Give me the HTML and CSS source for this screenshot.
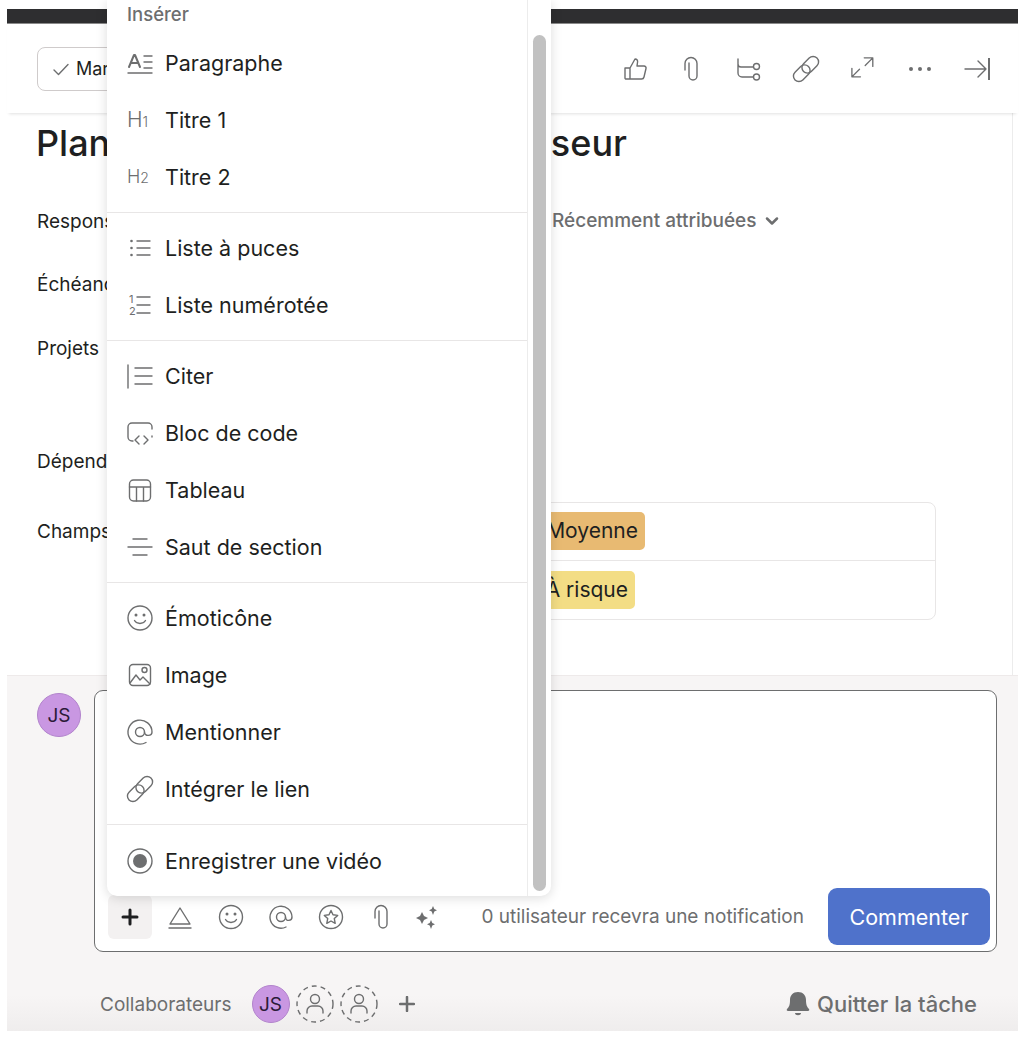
FILE: index.html
```html
<!DOCTYPE html>
<html lang="fr">
<head>
    <meta charset="UTF-8">
    <title>Tâche</title>
    <link rel="stylesheet" href="styles.css">
</head>
<body>
    <div class="app">
        <div class="topbar"></div>
        <header class="task-header">
            <button class="mark-btn">
                <svg width="18" height="18" viewBox="0 0 18 18"><path d="M2 10l4.500 4.500L16 4.500" class="line"/></svg>
                Marquer comme terminée
            </button>
            <div class="header-icons">
                <svg width="26" height="26" viewBox="0 0 26 26"><path d="M3 12h5v11H4a1 1 0 0 1-1-1zM8 12l5-9c2 0 3 1.500 2.500 3.500L15 10h7a2 2 0 0 1 2 2.500L22 21a2.500 2.500 0 0 1-2.500 2H8" class="line"/></svg>
                <svg width="26" height="26" viewBox="0 0 26 26"><path d="M6 14V7.500a6 6 0 0 1 12 0V20a4 4 0 0 1-8 0V7" class="line"/></svg>
                <svg width="26" height="26" viewBox="0 0 26 26"><path d="M2 3v14a4 4 0 0 0 4 4h11M2 8a3 3 0 0 0 3 3h12" class="line"/><circle cx="20.500" cy="10.500" r="3" class="line"/><circle cx="20.500" cy="21" r="3" class="line"/></svg>
                <svg width="26" height="26" viewBox="0 0 26 26"><g class="line" transform="rotate(-45 13 13)"><rect x="-2.500" y="7.500" width="19" height="11" rx="5.500"/><rect x="9.500" y="7.500" width="19" height="11" rx="5.500"/></g></svg>
                <svg width="26" height="26" viewBox="0 0 26 26"><path d="M15 3h9v9M24 3l-8 8M11 23H2v-9M2 23l8-8" class="line" transform="translate(0 -1) scale(.95)"/></svg>
                <svg width="26" height="26" viewBox="0 0 26 26"><circle cx="4" cy="13" r="2" class="fill"/><circle cx="13" cy="13" r="2" class="fill"/><circle cx="22" cy="13" r="2" class="fill"/></svg>
                <svg width="26" height="26" viewBox="0 0 26 26"><path d="M1 13h21M14 5l8 8-8 8" class="line"/><path d="M25 2v22" class="line bar"/></svg>
            </div>
        </header>

        <main class="task-body">
            <h1 class="task-title">Planifier une visite du fournisseur</h1>
            <div class="field field-assignee">
                <span class="field-label">Responsable</span>
                <span class="recent">Récemment attribuées
                    <svg width="14" height="14" viewBox="0 0 14 14"><path d="M2 4.500l5 5 5-5" class="line thick"/></svg>
                </span>
            </div>
            <div class="field field-date"><span class="field-label">Échéance</span></div>
            <div class="field field-projects"><span class="field-label">Projets</span></div>
            <div class="field field-deps"><span class="field-label">Dépendances</span></div>
            <div class="field field-custom">
                <span class="field-label">Champs</span>
                <div class="custom-card">
                    <div class="custom-row"><span class="chip chip-orange">Moyenne</span></div>
                    <div class="custom-row"><span class="chip chip-yellow">À risque</span></div>
                </div>
            </div>
        </main>

        <footer class="composer-area">
            <div class="composer-row">
                <div class="avatar">JS</div>
                <div class="composer">
                    <div class="composer-tools">
                        <span class="tool tool-active">
                            <svg width="18" height="18" viewBox="0 0 18 18"><path d="M9 2v14M2 9h14" class="line dark"/></svg>
                        </span>
                        <span class="tool">
                            <svg width="26" height="26" viewBox="0 0 26 26"><path d="M3 20L13 4l10 16zM2 24h22" class="line"/></svg>
                        </span>
                        <span class="tool">
                            <svg width="26" height="26" viewBox="0 0 26 26"><circle cx="13" cy="13" r="11.500" class="line"/><circle cx="9" cy="10" r="1.500" class="fill"/><circle cx="17" cy="10" r="1.500" class="fill"/><path d="M7.500 15.500c2.500 4 8.500 4 11 0" class="line"/></svg>
                        </span>
                        <span class="tool">
                            <svg width="26" height="26" viewBox="0 0 26 26"><circle cx="13" cy="13" r="4.500" class="line"/><path d="M17.500 13c0 5 6.500 4 6.500 0A11 11 0 1 0 18 23" class="line"/></svg>
                        </span>
                        <span class="tool">
                            <svg width="26" height="26" viewBox="0 0 26 26"><circle cx="13" cy="13" r="11.500" class="line"/><path d="M13 6.500l2 4.300 4.700.6-3.400 3.200.9 4.700-4.200-2.300-4.200 2.300.9-4.700-3.400-3.200 4.700-.6z" class="line"/></svg>
                        </span>
                        <span class="tool">
                            <svg width="26" height="26" viewBox="0 0 26 26"><path d="M7 14V7.500a6 6 0 0 1 12 0V20a4 4 0 0 1-8 0V7" class="line"/></svg>
                        </span>
                        <span class="tool tool-spark">
                            <svg width="26" height="26" viewBox="0 0 26 26"><path d="M9 8l2 4 4 2-4 2-2 4-2-4-4-2 4-2zM20 2l1.300 3 2.700 1.300-2.700 1.300L20 11l-1.300-3.400L16 6.300l2.700-1.300zM18 16l1.300 3 2.700 1.300-2.700 1.300L18 25l-1.300-3.400-2.700-1.300 2.700-1.300z" class="fill"/></svg>
                        </span>
                        <span class="notify">0 utilisateur recevra une notification</span>
                        <button class="comment-btn">Commenter</button>
                    </div>
                </div>
            </div>
            <div class="collab-row">
                <span class="collab-label">Collaborateurs</span>
                <div class="avatar avatar-small">JS</div>
                <svg class="ghost" width="38" height="38" viewBox="0 0 38 38"><circle cx="19" cy="19" r="18" class="line ghost-ring"/><circle cx="19" cy="14" r="4.500" class="line"/><path d="M11 28v-2a5 5 0 0 1 5-5h6a5 5 0 0 1 5 5v2" class="line"/></svg>
                <svg class="ghost" width="38" height="38" viewBox="0 0 38 38"><circle cx="19" cy="19" r="18" class="line ghost-ring"/><circle cx="19" cy="14" r="4.500" class="line"/><path d="M11 28v-2a5 5 0 0 1 5-5h6a5 5 0 0 1 5 5v2" class="line"/></svg>
                <svg class="collab-plus" width="16" height="16" viewBox="0 0 16 16"><path d="M8 1v14M1 8h14" class="line thick"/></svg>
                <span class="leave">
                    <svg width="24" height="26" viewBox="0 0 24 26"><path d="M12 1c-5 0-8 3.500-8 8 0 5-1 7-3 9-.7 1 0 2 1 2h20c1 0 1.700-1 1-2-2-2-3-4-3-9 0-4.500-3-8-8-8zM9 22h6c0 3-6 3-6 0z" class="fill"/></svg>
                    Quitter la tâche
                </span>
            </div>
        </footer>
    </div>

    <!-- menu Insérer -->
    <div class="insert-menu">
        <div class="menu-list">
            <div class="menu-title">Insérer</div>
            <div class="menu-group">
                <div class="menu-item">
                    <svg width="26" height="26" viewBox="0 0 26 26"><path d="M2 17L7 5h1l5 12M4 13h7" class="line heavy"/><path d="M1 23h24M17 6h8M17 12h8M17 18h8" class="line"/></svg>
                    Paragraphe
                </div>
                <div class="menu-item"><span class="h-icon">H<small>1</small></span>Titre 1</div>
                <div class="menu-item"><span class="h-icon h-icon-2">H<small>2</small></span>Titre 2</div>
            </div>
            <div class="menu-group">
                <div class="menu-item">
                    <svg width="26" height="26" viewBox="0 0 26 26"><circle cx="4.500" cy="6" r="1.300" class="fill"/><circle cx="4.500" cy="13" r="1.300" class="fill"/><circle cx="4.500" cy="20" r="1.300" class="fill"/><path d="M10 6h13M10 13h13M10 20h13" class="line"/></svg>
                    Liste à puces
                </div>
                <div class="menu-item">
                    <svg width="26" height="26" viewBox="0 0 26 26"><path d="M10 5h13M10 13h13M10 21h13" class="line"/></svg>
                    <span class="num-icon">1<br>2</span>
                    Liste numérotée
                </div>
            </div>
            <div class="menu-group">
                <div class="menu-item">
                    <svg width="26" height="26" viewBox="0 0 26 26"><path d="M1 2v23M8 5h17M8 13h17M8 21h17" class="line"/></svg>
                    Citer
                </div>
                <div class="menu-item">
                    <svg width="26" height="26" viewBox="0 0 26 26"><path d="M6 21H5a4 4 0 0 1-4-4V7a4 4 0 0 1 4-4h16a4 4 0 0 1 4 4v2M25 17v-1M12 16l-4 4 4 4M17 16l4 4-4 4" class="line"/></svg>
                    Bloc de code
                </div>
                <div class="menu-item">
                    <svg width="26" height="26" viewBox="0 0 26 26"><rect x="2.500" y="3" width="21" height="21" rx="4" class="line"/><path d="M2.500 10h21M9.500 10v14M16.500 10v14" class="line"/></svg>
                    Tableau
                </div>
                <div class="menu-item">
                    <svg width="26" height="26" viewBox="0 0 26 26"><path d="M6 5h14M1 13h24M6 21h14" class="line"/></svg>
                    Saut de section
                </div>
            </div>
            <div class="menu-group">
                <div class="menu-item">
                    <svg width="26" height="26" viewBox="0 0 26 26"><circle cx="13" cy="13" r="12" class="line"/><circle cx="9" cy="10" r="1.500" class="fill"/><circle cx="17" cy="10" r="1.500" class="fill"/><path d="M7.500 15.500c2.500 4 8.500 4 11 0" class="line"/></svg>
                    Émoticône
                </div>
                <div class="menu-item">
                    <svg width="26" height="26" viewBox="0 0 26 26"><rect x="2.500" y="2.500" width="21" height="21" rx="3.500" class="line"/><circle cx="17.500" cy="8" r="2.500" class="line"/><path d="M3 21l6-8 4 5 3-3 7 7" class="line"/></svg>
                    Image
                </div>
                <div class="menu-item">
                    <svg width="26" height="26" viewBox="0 0 26 26"><circle cx="13" cy="13" r="4.500" class="line"/><path d="M17.500 13c0 5 7.500 4 7.500 0A12 12 0 1 0 19 23.500" class="line"/></svg>
                    Mentionner
                </div>
                <div class="menu-item">
                    <svg width="26" height="26" viewBox="0 0 26 26"><g class="line" transform="rotate(-45 13 13)"><rect x="-2.500" y="7.500" width="19" height="11" rx="5.500"/><rect x="9.500" y="7.500" width="19" height="11" rx="5.500"/></g></svg>
                    Intégrer le lien
                </div>
            </div>
            <div class="menu-group">
                <div class="menu-item">
                    <svg width="26" height="26" viewBox="0 0 26 26"><circle cx="13" cy="13" r="12" class="line"/><circle cx="13" cy="13" r="7" class="fill"/></svg>
                    Enregistrer une vidéo
                </div>
            </div>
        </div>
        <div class="menu-scroll"><div class="menu-thumb"></div></div>
    </div>
</body>
</html>
```

FILE: styles.css
```css
body {
    font-family: "Inter", "Liberation Sans", sans-serif;
    background-color: #ffffff;
    margin: 0;
    padding: 0;
    color: #1e1f21;
    position: relative;
    height: 1040px;
    overflow: hidden;
}

.line {
    fill: none;
    stroke: #6d6e6f;
    stroke-width: 1.4;
    stroke-linecap: round;
    stroke-linejoin: round;
}

.line.thick {
    stroke-width: 2.5;
}

.line.heavy {
    stroke-width: 2;
}

.line.bar {
    stroke-width: 2;
    stroke-linecap: butt;
}

.line.dark {
    stroke: #1e1f21;
    stroke-width: 3;
}

.line.ghost-ring {
    stroke-dasharray: 5 4;
    stroke-linecap: butt;
}

.fill {
    fill: #6d6e6f;
}

.app {
    margin-left: 7px;
    width: 1011px;
    padding-top: 9px;
    height: 1022px;
    display: flex;
    flex-direction: column;
}

.topbar {
    height: 15px;
    background-color: #2e2e30;
    border-bottom: 1px solid #8a8a8a;
    box-sizing: border-box;
}

.task-header {
    height: 89px;
    box-sizing: border-box;
    display: flex;
    justify-content: space-between;
    align-items: center;
    padding: 0 28px 0 30px;
    box-shadow: 0 3px 3px -2px rgba(0, 0, 0, 0.12);
    position: relative;
}

.mark-btn {
    height: 44px;
    width: 300px;
    display: flex;
    align-items: center;
    gap: 6px;
    padding: 0 14px;
    font: inherit;
    font-size: 18px;
    color: #1e1f21;
    background: #ffffff;
    border: 1px solid #cfcbcb;
    border-radius: 8px;
    white-space: nowrap;
    overflow: hidden;
}

.header-icons {
    display: flex;
    gap: 31px;
}

.header-icons svg {
    overflow: visible;
}

.task-body {
    height: 562px;
    box-sizing: border-box;
    padding: 0 5px 0 30px;
    border-right: 1px solid #ececec;
    margin-right: 5px;
    overflow: hidden;
}

.task-title {
    margin: 8px 0 0 -1px;
    font-size: 36px;
    line-height: 44px;
    font-weight: 500;
    word-spacing: 3.750px;
    white-space: nowrap;
}

.field {
    display: flex;
    font-size: 19px;
    line-height: 22px;
}

.field-label {
    width: 150px;
    flex: none;
}

.field-assignee {
    margin-top: 46px;
}

.field-date {
    margin-top: 41px;
}

.field-projects {
    margin-top: 42px;
}

.field-deps {
    margin-top: 91px;
}

.field-custom {
    margin-top: 48px;
}

.recent {
    margin-left: 365px;
    margin-top: -2px;
    color: #6d6e6f;
    font-weight: 500;
    display: flex;
    align-items: center;
    gap: 8px;
    white-space: nowrap;
}

.custom-card {
    width: 749px;
    margin-top: -19px;
    border: 1px solid #e8e6e6;
    border-radius: 8px;
    box-sizing: border-box;
}

.custom-row {
    height: 57px;
    display: flex;
    align-items: center;
    justify-content: flex-end;
    padding-right: 290px;
    font-size: 21px;
}

.custom-row + .custom-row {
    height: 58px;
    border-top: 1px solid #e8e6e6;
}

.chip {
    height: 38px;
    line-height: 38px;
    padding: 0 7px 0 40px;
    border-radius: 5px;
}

.chip-orange {
    background-color: #e8ba72;
    margin-top: -2px;
}

.chip-yellow {
    background-color: #f3dd85;
    margin-right: 10px;
    margin-top: -1px;
}

.composer-area {
    flex: 1;
    background: linear-gradient(#f7f5f5 90%, #efeded);
    border-top: 1px solid #eeeaea;
    box-sizing: border-box;
    padding: 14px 21px 0 30px;
    display: flex;
    flex-direction: column;
}

.composer-row {
    display: flex;
    gap: 13px;
    align-items: flex-start;
}

.avatar {
    width: 44px;
    height: 44px;
    flex: none;
    margin-top: 3px;
    box-sizing: border-box;
    border-radius: 50%;
    background-color: #c997e2;
    border: 1px solid #b283cc;
    display: flex;
    align-items: center;
    justify-content: center;
    font-size: 19px;
    color: #2b1a38;
}

.avatar-small {
    width: 38px;
    height: 38px;
    margin-top: 0;
}

.composer {
    flex: 1;
    height: 262px;
    box-sizing: border-box;
    background-color: #ffffff;
    border: 1px solid #6d6e6f;
    border-radius: 9px;
    display: flex;
    flex-direction: column;
    justify-content: flex-end;
}

.composer-tools {
    display: flex;
    align-items: center;
    padding: 0 6px 6px 13px;
}

.tool {
    width: 44px;
    height: 44px;
    margin-right: 6.300px;
    border-radius: 6px;
    display: flex;
    align-items: center;
    justify-content: center;
}

.tool-active {
    background-color: #f3f1f1;
}

.tool-spark {
    margin-left: -6px;
}

.notify {
    margin-left: auto;
    margin-right: 24px;
    font-size: 19px;
    color: #6d6e6f;
    white-space: nowrap;
}

.comment-btn {
    width: 162px;
    height: 57px;
    border: none;
    border-radius: 9px;
    background-color: #4f72cb;
    color: #ffffff;
    font: inherit;
    font-size: 21.500px;
}

.collab-row {
    margin-top: 33px;
    padding-left: 63px;
    display: flex;
    align-items: center;
}

.collab-label {
    font-size: 19px;
    color: #6d6e6f;
    margin-right: 20px;
}

.ghost {
    margin-left: 6px;
}

.collab-plus {
    margin-left: 21px;
}

.leave {
    margin-left: auto;
    margin-right: 20px;
    display: flex;
    align-items: center;
    gap: 7px;
    font-size: 22px;
    font-weight: 500;
    color: #6d6e6f;
}

.insert-menu {
    position: absolute;
    left: 107px;
    top: 0;
    width: 444px;
    height: 896px;
    display: flex;
    background-color: #ffffff;
    border-radius: 0 0 10px 10px;
    box-shadow: 0 2px 12px rgba(0, 0, 0, 0.14);
    overflow: hidden;
}

.menu-list {
    flex: 1;
    overflow: hidden;
}

.menu-item svg {
    overflow: visible;
}

.menu-title {
    height: 34px;
    padding: 4px 0 0 20px;
    box-sizing: border-box;
    font-size: 18.500px;
    font-weight: 500;
    line-height: 20px;
    color: #6d6e6f;
}

.menu-group {
    padding: 0 0 7px;
    border-bottom: 1px solid #e8e6e6;
}

.menu-group + .menu-group {
    padding-top: 6px;
}

.menu-group:last-child {
    padding-top: 7px;
    border-bottom: none;
}

.menu-item {
    height: 57px;
    display: flex;
    align-items: center;
    padding-left: 20px;
    gap: 12px;
    font-size: 21.500px;
    position: relative;
}

.h-icon {
    width: 26px;
    font-size: 21px;
    font-weight: 300;
    color: #6d6e6f;
}

.h-icon small {
    font-size: 14px;
}

.h-icon-2 {
    font-size: 18px;
}

.num-icon {
    position: absolute;
    left: 22px;
    top: 17px;
    font-size: 11px;
    line-height: 12px;
    color: #6d6e6f;
}

.menu-scroll {
    width: 24px;
    flex: none;
    border-left: 1px solid #ececec;
    box-sizing: border-box;
    padding: 35px 5px 5px;
}

.menu-thumb {
    height: 100%;
    background-color: #c1c1c1;
    border-radius: 7px;
}
```
